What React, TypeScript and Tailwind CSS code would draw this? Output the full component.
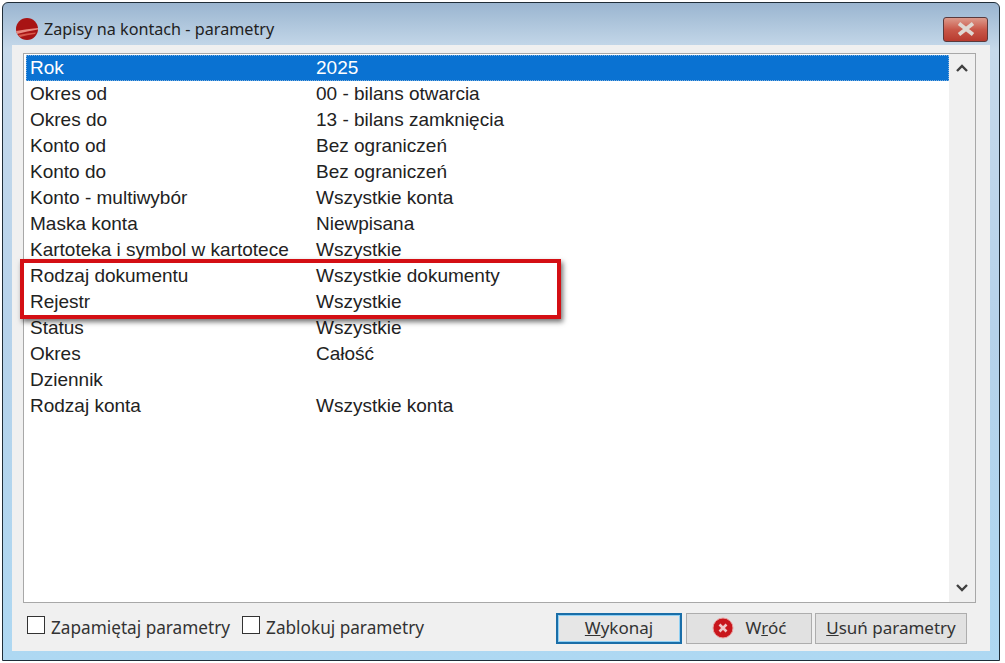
const rows: [string, string][] = [
  ['Rok', '2025'],
  ['Okres od', '00 - bilans otwarcia'],
  ['Okres do', '13 - bilans zamknięcia'],
  ['Konto od', 'Bez ograniczeń'],
  ['Konto do', 'Bez ograniczeń'],
  ['Konto - multiwybór', 'Wszystkie konta'],
  ['Maska konta', 'Niewpisana'],
  ['Kartoteka i symbol w kartotece', 'Wszystkie'],
  ['Rodzaj dokumentu', 'Wszystkie dokumenty'],
  ['Rejestr', 'Wszystkie'],
  ['Status', 'Wszystkie'],
  ['Okres', 'Całość'],
  ['Dziennik', ''],
  ['Rodzaj konta', 'Wszystkie konta'],
]

function AppIcon() {
  return (
    <svg width="24" height="24" viewBox="0 0 24 24" className="shrink-0">
      <circle cx="12" cy="12" r="11" fill="#a81414" />
      <path d="M1 14 Q12 12 23 11 L23 12.5 Q12 14 2 17 Z" fill="#e88a80" />
      <path d="M3 18 Q12 16 21 15.5 L20 17 Q12 18 5 20 Z" fill="#d85a4c" />
    </svg>
  )
}

function ErrorIcon() {
  return (
    <svg width="22" height="22" viewBox="0 0 22 22">
      <circle cx="11" cy="11" r="10" fill="#c8161c" stroke="#e8a0a0" strokeWidth="1" />
      <path d="M7.5 7.5 L14.5 14.5 M14.5 7.5 L7.5 14.5" stroke="#f0c8c8" strokeWidth="2.6" />
    </svg>
  )
}

function Check({ label }: { label: string }) {
  return (
    <div className="flex items-start gap-[6px]">
      <span className="h-[18px] w-[18px] border border-[#333] bg-white" />
      <span className="leading-[24px]">{label}</span>
    </div>
  )
}

export default function App() {
  return (
    <div className="h-[663px] w-[1005px] overflow-hidden bg-white pl-[2px] pr-[5px] pt-[2px] font-['Liberation_Sans',sans-serif] text-[19px] text-[#222]">
      <div className="flex h-[659px] flex-col rounded-t-[6px] border border-[#1f2d38] bg-[linear-gradient(#9ab5d0,#c6d9ea_7%,#b6d2ea_50%,#aed8f2)] px-[9px] pb-[9px]">
        <div className="flex h-[42px] shrink-0 items-center pt-[10px]">
          <div className="ml-[3px] flex items-center gap-[5px] font-['Noto_Sans',sans-serif] text-[16.2px]">
            <AppIcon />
            <span>Zapisy na kontach - parametry</span>
          </div>
          <div className="ml-auto mr-[2px] flex h-[25px] w-[45px] items-center justify-center rounded-[3px] border border-[#5a3a3c] bg-gradient-to-b from-[#dc9a8c] via-[#c9584a] to-[#b83a2e]">
            <svg width="22" height="14" viewBox="0 0 22 14">
              <path d="M4 1.5 L18 12.5 M18 1.5 L4 12.5" stroke="#dfd8d2" strokeWidth="3.8" />
            </svg>
          </div>
        </div>
        <div className="flex min-h-0 flex-1 flex-col bg-[#f0f0f0] pl-[11px] pr-[14px] pt-[8px]">
          <div className="relative flex h-[550px] shrink-0 border border-[#a8a8a8] bg-white">
            <div className="min-w-0 flex-1 pl-[2px] pt-[1px]">
              {rows.map(([name, value], i) => (
                <div
                  key={name}
                  className={i === 0 ? 'flex h-[26px] items-center border border-dotted border-[#7fb0de] bg-[#0a72d2] text-white' : 'flex h-[26px] items-center border border-transparent'}
                >
                  <span className="w-[289px] shrink-0 pl-[3px]">{name}</span>
                  <span>{value}</span>
                </div>
              ))}
            </div>
            <div className="flex w-[26px] shrink-0 flex-col items-center justify-between bg-[#f0f0f0] py-[9px] text-[#444]">
              <svg width="14" height="10" viewBox="0 0 14 10">
                <path d="M2 8 L7 3 L12 8" fill="none" stroke="#404040" strokeWidth="2.4" />
              </svg>
              <svg width="14" height="10" viewBox="0 0 14 10">
                <path d="M2 2 L7 7 L12 2" fill="none" stroke="#404040" strokeWidth="2.4" />
              </svg>
            </div>
            <div className="absolute left-[-4px] top-[205px] h-[60px] w-[541px] border-[4px] border-[#d40f14] shadow-[2px_3px_5px_rgba(0,0,0,0.55)]" />
          </div>
          <div className="flex items-start pl-[4px] pt-[10px]">
            <div className="flex gap-[12px] pt-[3px] font-['Noto_Sans',sans-serif] text-[17.2px] text-[#333]">
              <Check label="Zapamiętaj parametry" />
              <Check label="Zablokuj parametry" />
            </div>
            <div className="ml-auto mr-[9px] flex gap-[4px] font-['Noto_Sans',sans-serif] text-[17px] text-[#333]">
              <button className="h-[31px] w-[126px] border-[2px] border-[#1a6ea8] bg-[#e6e6e6] pb-[1px] shadow-[inset_0_0_0_1px_#8fd0f4]">
                <u>W</u>ykonaj
              </button>
              <button className="flex h-[31px] w-[126px] items-center justify-center gap-[12px] border border-[#adadad] bg-[#e1e1e1] pb-[1px]">
                <ErrorIcon />
                <span>W<u>r</u>óć</span>
              </button>
              <button className="-ml-[1px] h-[31px] w-[152px] border border-[#adadad] bg-[#e1e1e1] pb-[1px]">
                <u>U</u>suń parametry
              </button>
            </div>
          </div>
        </div>
      </div>
    </div>
  )
}
